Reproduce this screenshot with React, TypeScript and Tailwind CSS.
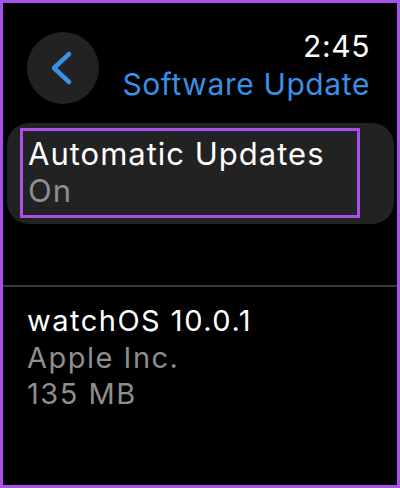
export default function App() {
  return (
    <div
      className="w-[400px] h-[488px] bg-black border-[3px] border-[#a950e8] overflow-hidden text-white"
      style={{ fontFamily: 'Inter, "Noto Sans", sans-serif' }}
    >
      {/* header */}
      <div className="flex items-start justify-between pl-[24px] pr-[27px] h-[120px]">
        <button className="mt-[29px] w-[72px] h-[72px] rounded-full bg-[#222222] flex items-center justify-center">
          <svg width="72" height="72" viewBox="0 0 72 72">
            <polyline
              points="42,22 27,36 42,50"
              fill="none"
              stroke="#3a8fe6"
              strokeWidth="4.5"
              strokeLinecap="round"
              strokeLinejoin="round"
            />
          </svg>
        </button>
        <div className="mt-[24px] flex flex-col items-end text-[30px] leading-[38px] tracking-[0.6px]">
          <span className="text-white">2:45</span>
          <span className="text-[#3a8fe6]">Software Update</span>
        </div>
      </div>

      {/* automatic updates card */}
      <div className="ml-[4px] mr-[3px] h-[101px] rounded-[22px] bg-[#222222] pt-[5px] pl-[13px] pr-[34px]">
        <div className="h-[90px] border-[3px] border-[#a950e8] pl-[5px] pt-[4px] text-[31px] leading-[37px] tracking-[1px]">
          <div className="text-white">Automatic Updates</div>
          <div className="text-[#8e8e8e]">On</div>
        </div>
      </div>

      {/* divider */}
      <div className="mt-[61px] h-[2px] bg-[#3a3a3a]" />

      {/* update info */}
      <div className="pl-[24px] pt-[16px] text-[29px] leading-[36.5px] tracking-[1.5px]">
        <div className="text-white">watchOS 10.0.1</div>
        <div className="text-[#8e8e8e]">Apple Inc.</div>
        <div className="text-[#8e8e8e]">135 MB</div>
      </div>
    </div>
  )
}
